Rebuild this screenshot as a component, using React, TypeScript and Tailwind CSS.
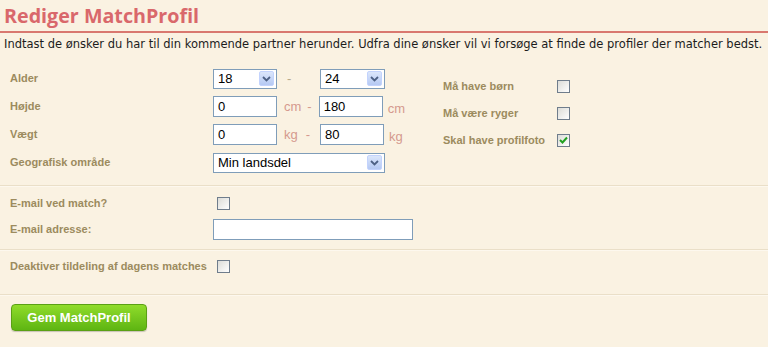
import React from 'react';

const labelCls = "shrink-0 whitespace-nowrap font-['Liberation_Sans',sans-serif] text-[11px] font-bold text-[#9c8b5e]";

const Chevron = () => (
  <svg width="9" height="6" viewBox="0 0 9 6">
    <path d="M1 1 L4.5 4.5 L8 1" fill="none" stroke="#4d6185" strokeWidth="1.8" />
  </svg>
);

const Select = ({ value, width }: { value: string; width: string }) => (
  <div className={`${width} shrink-0 h-[20px] flex items-center justify-between border border-[#7f9db9] bg-white pl-[4px] pr-[2px]`}>
    <span className="font-['Liberation_Sans',sans-serif] text-[13px] text-black leading-none">{value}</span>
    <div className="w-[15px] h-[15px] rounded-[2px] bg-gradient-to-b from-[#dbe6fb] to-[#b5c9f3] border border-[#c3d3fd] flex items-center justify-center">
      <Chevron />
    </div>
  </div>
);

const TextBox = ({ value, width = 'w-[64px]' }: { value?: string; width?: string }) => (
  <div className={`${width} shrink-0 h-[21px] flex items-center border border-[#7f9db9] bg-white px-[4px]`}>
    <span className="font-['Liberation_Sans',sans-serif] text-[13px] text-black leading-none">{value}</span>
  </div>
);

const Check = ({ checked = false }: { checked?: boolean }) => (
  <div className="w-[13px] h-[13px] shrink-0 border border-[#6f7d8c] bg-gradient-to-br from-[#dcdcd7] to-white flex items-center justify-center">
    {checked && (
      <svg width="9" height="8" viewBox="0 0 9 8">
        <path d="M1 4 L3.5 6.5 L8 1.5" fill="none" stroke="#21a121" strokeWidth="2" />
      </svg>
    )}
  </div>
);

const Unit = ({ children }: { children: React.ReactNode }) => (
  <span className="font-['Liberation_Sans',sans-serif] text-[13px] text-[#d59a8e]">{children}</span>
);

const Divider = () => (
  <div className="h-[2px] border-t border-[#eadfc8] border-b border-b-[#fdf8ee]" />
);

const App = () => {
  return (
    <div className="w-[768px] h-[347px] bg-[#faf2e2] overflow-hidden">
      {/* Titel */}
      <h1 className="pl-[4px] pt-[3px] h-[31px] font-['Open_Sans',sans-serif] text-[19.7px] font-bold text-[#d9686b] leading-[26px]">
        Rediger MatchProfil
      </h1>
      <div className="h-[2px] bg-[#d9786f]" />
      <p className="pl-[4px] pt-[4px] whitespace-nowrap font-['DejaVu_Sans',sans-serif] text-[11.5px] text-[#1c1c1c] leading-[14px]">
        Indtast de ønsker du har til din kommende partner herunder. Udfra dine ønsker vil vi forsøge at finde de profiler der matcher bedst.
      </p>

      {/* Præferencer */}
      <div className="flex pt-[17px] pb-[12px]">
        <div className="w-[405px] shrink-0 flex flex-col gap-[7px]">
          <div className="flex items-center h-[21px]">
            <span className={`${labelCls} w-[213px] pl-[10px]`}>Alder</span>
            <Select value="18" width="w-[64px]" />
            <span className="w-[43px] pl-[10px] font-['Liberation_Sans',sans-serif] text-[13px] text-[#b7a98a]">-</span>
            <Select value="24" width="w-[65px]" />
          </div>
          <div className="flex items-center h-[21px]">
            <span className={`${labelCls} w-[213px] pl-[10px]`}>Højde</span>
            <TextBox value="0" />
            <span className="w-[43px] flex pl-[7px] gap-[6px]">
              <Unit>cm</Unit>
              <Unit>-</Unit>
            </span>
            <TextBox value="180" />
            <span className="pl-[5px]"><Unit>cm</Unit></span>
          </div>
          <div className="flex items-center h-[21px]">
            <span className={`${labelCls} w-[213px] pl-[10px]`}>Vægt</span>
            <TextBox value="0" />
            <span className="w-[43px] flex pl-[7px] gap-[8px]">
              <Unit>kg</Unit>
              <Unit>-</Unit>
            </span>
            <TextBox value="80" />
            <span className="pl-[5px]"><Unit>kg</Unit></span>
          </div>
          <div className="flex items-center h-[21px]">
            <span className={`${labelCls} w-[213px] pl-[10px]`}>Geografisk område</span>
            <Select value="Min landsdel" width="w-[172px]" />
          </div>
        </div>

        <div className="flex flex-col gap-[13px] pl-[38px] pt-[11px]">
          <div className="flex items-center h-[14px]">
            <span className={`${labelCls} w-[114px]`}>Må have børn</span>
            <Check />
          </div>
          <div className="flex items-center h-[14px]">
            <span className={`${labelCls} w-[114px]`}>Må være ryger</span>
            <Check />
          </div>
          <div className="flex items-center h-[14px]">
            <span className={`${labelCls} w-[114px]`}>Skal have profilfoto</span>
            <Check checked />
          </div>
        </div>
      </div>

      <Divider />

      {/* E-mail */}
      <div className="flex flex-col gap-[9px] pt-[9px] pb-[9px]">
        <div className="flex items-center h-[14px]">
          <span className={`${labelCls} w-[217px] pl-[10px]`}>E-mail ved match?</span>
          <Check />
        </div>
        <div className="flex items-center h-[21px]">
          <span className={`${labelCls} w-[213px] pl-[10px]`}>E-mail adresse:</span>
          <TextBox width="w-[200px]" />
        </div>
      </div>

      <Divider />

      <div className="flex items-center h-[14px] mt-[8px] mb-[21px]">
        <span className={`${labelCls} w-[217px] pl-[10px]`}>Deaktiver tildeling af dagens matches</span>
        <Check />
      </div>

      <Divider />

      <div className="pl-[11px] pt-[8px]">
        <button className="w-[136px] h-[27px] rounded-[4px] border border-[#5aa014] bg-gradient-to-b from-[#8fdc2a] to-[#5eb512] font-['Liberation_Sans',sans-serif] text-[13px] font-bold text-white shadow-[0_1px_1px_rgba(0,0,0,0.2)]">
          Gem MatchProfil
        </button>
      </div>
    </div>
  );
};

export default App;
